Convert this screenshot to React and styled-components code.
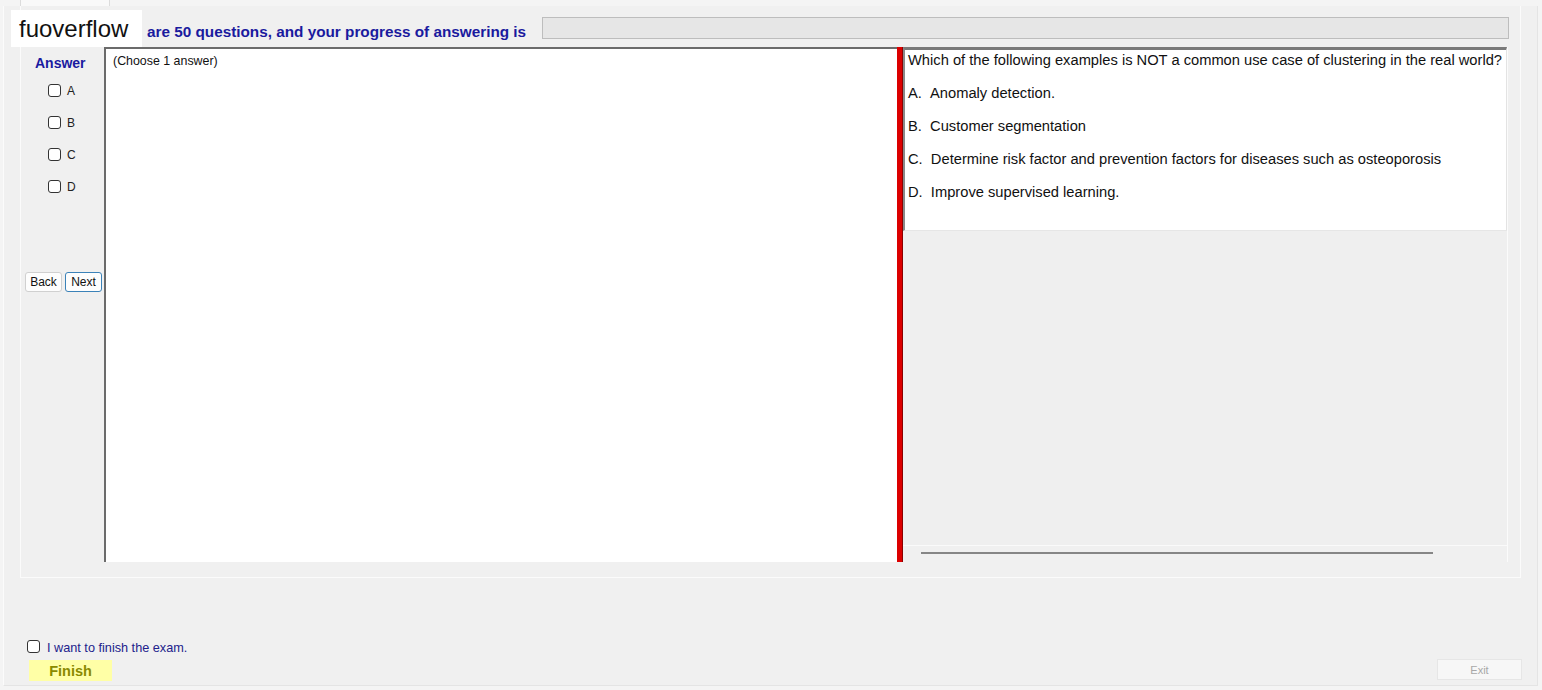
import React from "react";
import styled, { createGlobalStyle } from "styled-components";

const GlobalStyle = createGlobalStyle`
  html, body {
    margin: 0;
    padding: 0;
    background: #f4f4f4;
    font-family: "Liberation Sans", Arial, sans-serif;
  }
  * { box-sizing: border-box; }
`;

const options = [
  { key: "A", text: "Anomaly detection." },
  { key: "B", text: "Customer segmentation" },
  { key: "C", text: "Determine risk factor and prevention factors for diseases such as osteoporosis" },
  { key: "D", text: "Improve supervised learning." },
];

const App = () => {
  return (
    <Page>
      <GlobalStyle />
      <TopStrip>
        <Tab />
      </TopStrip>
      <Window>
        <Panel>
          <Logo>fuoverflow</Logo>
          <Header>
            <Title>are 50 questions, and your progress of answering is</Title>
            <Progress />
          </Header>
          <Body>
            <LeftCol>
              <AnswerLabel>Answer</AnswerLabel>
              <OptionList>
                {options.map((o) => (
                  <OptionRow key={o.key}>
                    <Check type="checkbox" />
                    <span>{o.key}</span>
                  </OptionRow>
                ))}
              </OptionList>
              <NavRow>
                <NavButton>Back</NavButton>
                <NavButton $focused>Next</NavButton>
              </NavRow>
            </LeftCol>
            <AnswerArea>(Choose 1 answer)</AnswerArea>
            <Splitter />
            <RightCol>
              <QuestionBox>
                <QuestionText>
                  Which of the following examples is NOT a common use case of clustering in the real world?
                </QuestionText>
                {options.map((o) => (
                  <OptionText key={o.key}>
                    {o.key}.&nbsp;&nbsp;{o.text}
                  </OptionText>
                ))}
              </QuestionBox>
              <LowerArea />
              <ScrollStrip>
                <ScrollThumb />
              </ScrollStrip>
            </RightCol>
          </Body>
        </Panel>
        <FinishRow>
          <Check type="checkbox" />
          <FinishLabel>I want to finish the exam.</FinishLabel>
        </FinishRow>
        <ButtonRow>
          <FinishButton>Finish</FinishButton>
          <ExitButton>Exit</ExitButton>
        </ButtonRow>
      </Window>
    </Page>
  );
};

export default App;

const Page = styled.div`
  width: 1542px;
  height: 690px;
  background: #f4f4f4;
  overflow: hidden;
`;

const TopStrip = styled.div`
  height: 6px;
  padding-left: 20px;
`;

const Tab = styled.div`
  width: 90px;
  height: 6px;
  background: #f9f9f9;
  border-left: 1px solid #dcdcdc;
  border-right: 1px solid #dcdcdc;
`;

const Window = styled.div`
  margin-left: 3px;
  width: 1535px;
  height: 680px;
  background: #f0f0f0;
  border-left: 1px solid #fbfbfb;
  border-right: 1px solid #e4e4e4;
  border-bottom: 1px solid #e4e4e4;
  padding-right: 15px;
  display: flex;
  flex-direction: column;
`;

const Panel = styled.div`
  position: relative;
  margin-left: 16px;
  width: 1501px;
  height: 572px;
  padding: 0 12px 15px 2px;
  border-right: 1px solid #fbfbfb;
  border-bottom: 1px solid #fbfbfb;
  border-left: 1px solid #fbfbfb;
  display: flex;
  flex-direction: column;
`;

const Logo = styled.div`
  position: absolute;
  left: -10px;
  top: 4px;
  width: 131px;
  height: 37px;
  background: #ffffff;
  color: #111;
  font-size: 24px;
  line-height: 38px;
  padding-left: 8px;
  z-index: 2;
`;

const Header = styled.div`
  height: 41px;
  display: flex;
  align-items: flex-start;
  padding-top: 11px;
`;

const Title = styled.div`
  margin-left: 124px;
  margin-top: 4px;
  font-size: 15.3px;
  font-weight: bold;
  line-height: 22px;
  color: #1a1a9e;
  white-space: nowrap;
`;

const Progress = styled.div`
  flex: 1;
  margin-left: 16px;
  margin-right: -1px;
  height: 22px;
  background: #e6e6e6;
  border: 1px solid #bdbdbd;
`;

const Body = styled.div`
  height: 515px;
  display: flex;
`;

const LeftCol = styled.div`
  width: 81px;
  display: flex;
  flex-direction: column;
  padding-top: 7px;
`;

const AnswerLabel = styled.div`
  margin-left: 12px;
  font-size: 14px;
  font-weight: bold;
  line-height: 18px;
  color: #1a1aa0;
`;

const OptionList = styled.div`
  margin-top: 12px;
  display: flex;
  flex-direction: column;
  gap: 19px;
`;

const OptionRow = styled.label`
  height: 13px;
  display: flex;
  align-items: center;
  gap: 6px;
  padding-left: 25px;
  font-size: 12px;
  color: #222;
`;

const Check = styled.input`
  appearance: none;
  margin: 0;
  width: 13px;
  height: 13px;
  flex: none;
  background: #fff;
  border: 1px solid #333;
  border-radius: 3px;
`;

const NavRow = styled.div`
  margin-top: 79px;
  padding-left: 2px;
  display: flex;
  gap: 3px;
`;

const NavButton = styled.button`
  width: 37px;
  height: 20px;
  padding: 0;
  font-family: "Liberation Sans", Arial, sans-serif;
  font-size: 12px;
  color: #111;
  background: #fdfdfd;
  border: 1px solid ${(p) => (p.$focused ? "#3b82b8" : "#d0d0d0")};
  border-radius: 3px;
`;

const AnswerArea = styled.div`
  width: 793px;
  background: #ffffff;
  border-top: 2px solid #6b6b6b;
  border-left: 2px solid #6b6b6b;
  padding: 4px 0 0 7px;
  font-size: 12.4px;
  line-height: 16px;
  color: #111;
`;

const Splitter = styled.div`
  width: 6px;
  background: #dc0000;
  border-right: 1px solid #8c0000;
`;

const RightCol = styled.div`
  flex: 1;
  display: flex;
  flex-direction: column;
  border-right: 1px solid #fbfbfb;
`;

const QuestionBox = styled.div`
  height: 184px;
  background: #ffffff;
  border-top: 3px solid #7a7a7a;
  border-left: 2px solid #8a8a8a;
  border-right: 1px solid #e3e3e3;
  border-bottom: 1px solid #e6e6e6;
  padding-left: 3px;
  color: #111;
  font-size: 14.7px;
`;

const QuestionText = styled.div`
  line-height: 20px;
  white-space: nowrap;
`;

const OptionText = styled.div`
  margin-top: 13px;
  line-height: 20px;
  white-space: nowrap;
`;

const LowerArea = styled.div`
  flex: 1;
  background: #efefef;
`;

const ScrollStrip = styled.div`
  height: 17px;
  border-top: 1px solid #fafafa;
  padding: 6px 0 0 18px;
`;

const ScrollThumb = styled.div`
  width: 512px;
  height: 2px;
  background: #868686;
`;

const FinishRow = styled.label`
  margin-top: 62px;
  padding-left: 23px;
  height: 13px;
  display: flex;
  align-items: center;
  gap: 7px;
`;

const FinishLabel = styled.span`
  font-size: 12.7px;
  line-height: 14px;
  color: #22228c;
  margin-top: 3px;
`;

const ButtonRow = styled.div`
  margin-top: 6px;
  padding-left: 25px;
  display: flex;
  justify-content: space-between;
  align-items: flex-start;
`;

const FinishButton = styled.button`
  margin-top: 1px;
  width: 83px;
  height: 21px;
  padding: 0;
  border: none;
  background: #ffffa6;
  color: #8a8a00;
  font-family: "Liberation Sans", Arial, sans-serif;
  font-size: 14.5px;
  font-weight: bold;
`;

const ExitButton = styled.button`
  width: 85px;
  height: 21px;
  padding: 0;
  background: #f7f7f7;
  border: 1px solid #e6e6e6;
  color: #a8a8a8;
  font-family: "Liberation Sans", Arial, sans-serif;
  font-size: 11px;
`;
